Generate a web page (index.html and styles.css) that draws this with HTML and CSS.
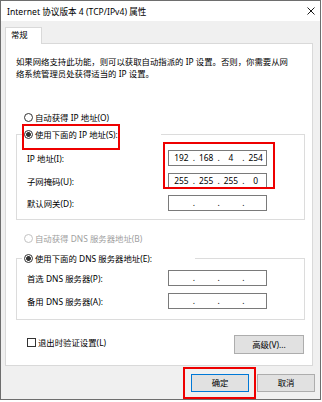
FILE: index.html
```html
<!DOCTYPE html>
<html lang="zh-CN">
<head>
<meta charset="utf-8">
<title>Internet 协议版本 4 (TCP/IPv4) 属性</title>
<link rel="stylesheet" href="styles.css">
</head>
<body>
<div class="window">
  <div class="titlebar">
    <span class="title">Internet 协议版本 4 (TCP/IPv4) 属性</span>
    <svg class="close" width="8" height="8" viewBox="0 0 8 8" aria-label="关闭"><path d="M0.5 0.5 L7.5 7.5 M7.5 0.5 L0.5 7.5" stroke="#1a1a1a" stroke-width="1" fill="none"/></svg>
  </div>
  <div class="tabs"><div class="tab">常规</div></div>
  <div class="panel">
    <p class="intro">如果网络支持此功能，则可以获取自动指派的 IP 设置。否则，你需要从网<br>络系统管理员处获得适当的 IP 设置。</p>

    <div class="radio-row row-auto-ip"><span class="radio"></span><span>自动获得 IP 地址(O)</span></div>

    <div class="group group-ip">
      <div class="legend legend-ip"><span class="radio checked"></span><span>使用下面的 IP 地址(S):</span><span class="mark mark-legend"></span></div>
      <div class="field field-first"><span class="label">IP 地址(I):</span>
        <div class="ip"><span>192</span><span class="dot">.</span><span>168</span><span class="dot">.</span><span>4</span><span class="dot">.</span><span>254</span></div>
      </div>
      <div class="field field-next"><span class="label">子网掩码(U):</span>
        <div class="ip"><span>255</span><span class="dot">.</span><span>255</span><span class="dot">.</span><span>255</span><span class="dot">.</span><span>0</span></div>
      </div>
      <div class="field field-next"><span class="label">默认网关(D):</span>
        <div class="ip"><span></span><span class="dot">.</span><span></span><span class="dot">.</span><span></span><span class="dot">.</span><span></span></div>
      </div>
      <span class="mark mark-inputs"></span>
    </div>

    <div class="radio-row row-auto-dns disabled"><span class="radio"></span><span>自动获得 DNS 服务器地址(B)</span></div>

    <div class="group group-dns">
      <div class="legend legend-dns"><span class="radio checked"></span><span>使用下面的 DNS 服务器地址(E):</span></div>
      <div class="field field-dns1"><span class="label">首选 DNS 服务器(P):</span>
        <div class="ip"><span></span><span class="dot">.</span><span></span><span class="dot">.</span><span></span><span class="dot">.</span><span></span></div>
      </div>
      <div class="field field-dns2"><span class="label">备用 DNS 服务器(A):</span>
        <div class="ip"><span></span><span class="dot">.</span><span></span><span class="dot">.</span><span></span><span class="dot">.</span><span></span></div>
      </div>
    </div>

    <div class="options-row">
      <label class="check-row"><span class="checkbox"></span><span>退出时验证设置(L)</span></label>
      <button class="btn btn-advanced" type="button">高级(V)...</button>
    </div>
  </div>

  <div class="footer">
    <span class="ok-wrap"><button class="btn btn-ok" type="button">确定</button><span class="mark mark-ok"></span></span>
    <button class="btn btn-cancel" type="button">取消</button>
  </div>
</div>
</body>
</html>
```

FILE: styles.css
```css
* { box-sizing: border-box; }

html, body {
  margin: 0;
  padding: 0;
  background: #ffffff;
}

body {
  width: 322px;
  height: 402px;
  overflow: hidden;
  font-family: "Noto Sans", "Noto Sans CJK SC", sans-serif;
  font-size: 8.4px;
  color: #000000;
}

.window {
  width: 321px;
  height: 400px;
  border: 1px solid #6e6e6e;
  background: #f0f0f0;
  display: flex;
  flex-direction: column;
}

.titlebar {
  flex: none;
  height: 20px;
  background: #ffffff;
  display: flex;
  align-items: center;
  justify-content: space-between;
  padding: 0 5px 0 6px;
}

.title {
  font-size: 8.6px;
  white-space: nowrap;
}

.close { display: block; }

.tabs {
  flex: none;
  height: 22px;
  padding-left: 4px;
  display: flex;
  align-items: flex-end;
}

.tab {
  position: relative;
  z-index: 1;
  width: 37px;
  height: 17px;
  margin-bottom: -1px;
  padding-left: 5px;
  background: #ffffff;
  border: 1px solid #d9d9d9;
  border-bottom: none;
  line-height: 14px;
}

.panel {
  flex: none;
  width: 308px;
  height: 323px;
  margin-left: 4px;
  background: #ffffff;
  border: 1px solid #d9d9d9;
  display: flex;
  flex-direction: column;
}

.intro {
  margin: 12px 0 0 10px;
  line-height: 12px;
  white-space: nowrap;
}

.radio-row {
  height: 14px;
  display: flex;
  align-items: center;
  gap: 2px;
  white-space: nowrap;
}

.row-auto-ip { margin: 30px 0 0 18px; }
.row-auto-dns { margin: 11px 0 0 18px; }

.disabled { color: #a0a0a0; }

.radio {
  flex: none;
  width: 9px;
  height: 9px;
  border: 1px solid #333333;
  border-radius: 50%;
  background: #ffffff;
}

.radio.checked {
  background: radial-gradient(circle, #333333 0 2.1px, #ffffff 2.7px);
}

.disabled .radio { border-color: #c2c2c2; }

.group {
  position: relative;
  border: 1px solid #dcdcdc;
  margin-right: 7px;
  margin-left: 10px;
  display: flex;
  flex-direction: column;
}

.group-ip { margin-top: 10px; padding-bottom: 8px; }
.group-dns { margin-top: 13px; padding-bottom: 10px; }

.legend {
  position: relative;
  height: 14px;
  margin: -8px 0 0 5px;
  padding-left: 2px;
  background: #ffffff;
  display: flex;
  align-items: center;
  gap: 2px;
  white-space: nowrap;
}

.legend-ip { width: 139px; }
.legend-dns { width: 173px; }

.field {
  display: flex;
  align-items: center;
  padding-left: 10px;
  height: 16px;
}

.field-first { margin-top: 9px; }
.field-next { margin-top: 6.5px; }
.field-dns1 { margin-top: 5px; }
.field-dns2 { margin-top: 7px; }

.label {
  flex: none;
  width: 141px;
  white-space: nowrap;
}

.ip {
  flex: none;
  width: 99px;
  height: 16px;
  border: 1px solid #7a7a7a;
  background: #ffffff;
  padding-left: 2px;
  display: grid;
  grid-template-columns: 1fr 4px 1fr 4px 1fr 4px 1fr;
  align-items: center;
  text-align: center;
  line-height: 14px;
}

.mark {
  position: absolute;
  border: 2px solid #ee0000;
  pointer-events: none;
}

.mark-legend {
  left: 0;
  top: -3px;
  width: 98px;
  height: 26px;
}

.mark-inputs {
  left: 146px;
  top: 7px;
  width: 112px;
  height: 47px;
}

.options-row {
  margin: 15px 8px 0 21px;
  height: 19px;
  display: flex;
  align-items: flex-start;
  justify-content: space-between;
}

.check-row {
  height: 14px;
  display: flex;
  align-items: center;
  gap: 2px;
  white-space: nowrap;
}

.checkbox {
  flex: none;
  width: 9px;
  height: 9px;
  border: 1px solid #333333;
  background: #ffffff;
}

.btn {
  margin: 0;
  padding: 0;
  font: inherit;
  color: #000000;
  background: #e1e1e1;
  border: 1px solid #adadad;
  text-align: center;
  line-height: 14px;
}

.btn-advanced {
  width: 70px;
  height: 19px;
}

.footer {
  flex: none;
  margin-top: 8px;
  padding-right: 5px;
  display: flex;
  justify-content: flex-end;
  gap: 8px;
}

.ok-wrap {
  position: relative;
  display: flex;
}

.btn-ok, .btn-cancel {
  width: 58px;
  height: 18px;
}

.btn-ok { border-color: #0078d7; }

.mark-ok {
  left: -8px;
  top: -7px;
  width: 73px;
  height: 32px;
}
```
